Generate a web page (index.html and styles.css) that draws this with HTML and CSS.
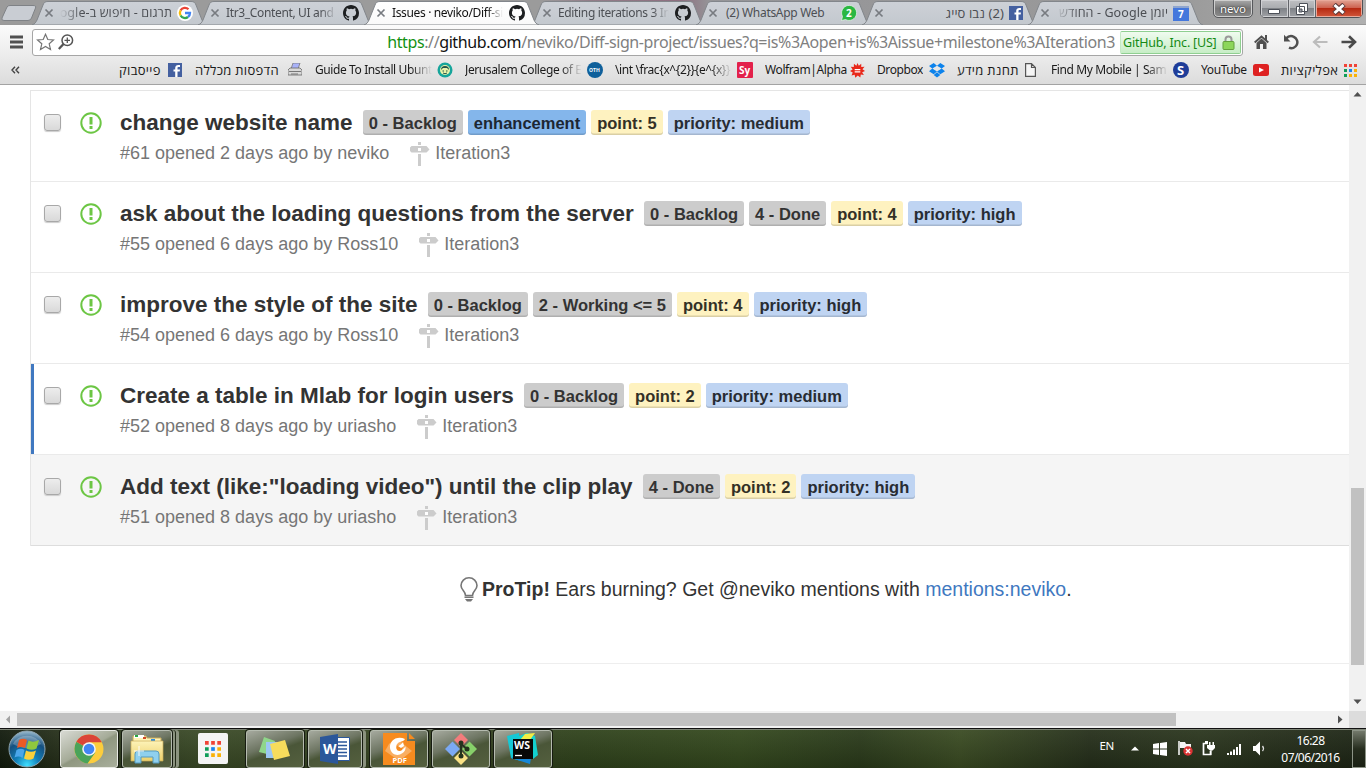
FILE: index.html
```html
<!DOCTYPE html>
<html lang="en">
<head>
<meta charset="utf-8">
<title>Issues · neviko/Diff-sign-project</title>
<link rel="stylesheet" href="styles.css">
</head>
<body>
<svg class="defs" width="0" height="0">
  <defs>
    <linearGradient id="tabGrad" x1="0" y1="0" x2="0" y2="1"><stop offset="0" stop-color="#cdd1d7"/><stop offset="1" stop-color="#c3c8ce"/></linearGradient>
    <linearGradient id="activeGrad" x1="0" y1="0" x2="0" y2="1"><stop offset="0" stop-color="#fff"/><stop offset="1" stop-color="#f9f9f9"/></linearGradient>
    <radialGradient id="orbGrad" cx=".5" cy=".95" r=".95"><stop offset="0" stop-color="#3fe0ff"/><stop offset=".35" stop-color="#127fb8"/><stop offset=".7" stop-color="#15507f"/><stop offset="1" stop-color="#9dbdd0"/></radialGradient>
    <linearGradient id="folderGrad" x1="0" y1="0" x2="0" y2="1"><stop offset="0" stop-color="#fdf3b8"/><stop offset="1" stop-color="#ecd06b"/></linearGradient>
    <symbol id="tab" viewBox="0 0 175 25"><path d="M0 25C3 24 4 22 5 20L11 5C12 2.500 13 1.500 16 1.500H159C162 1.500 163 2.500 164 5L170 20C171 22 172 24 175 25Z"/></symbol>
    <symbol id="close" viewBox="0 0 10 10"><path d="M1.500 1.500L8.500 8.500M8.500 1.500L1.500 8.500" fill="none" stroke="currentColor" stroke-width="1.700"/></symbol>
    <symbol id="github" viewBox="0 0 16 16"><path d="M8 0C3.580 0 0 3.580 0 8c0 3.540 2.290 6.530 5.470 7.590.4.070.55-.17.55-.38 0-.19-.01-.82-.01-1.490-2.010.37-2.530-.49-2.690-.94-.09-.23-.48-.94-.82-1.130-.28-.15-.68-.52-.01-.53.63-.01 1.080.58 1.230.82.72 1.210 1.870.87 2.330.66.07-.52.28-.87.51-1.070-1.780-.2-3.640-.89-3.640-3.950 0-.87.31-1.590.82-2.150-.08-.2-.36-1.020.08-2.120 0 0 .67-.21 2.200.82a7.600 7.600 0 0 1 4 0c1.530-1.040 2.200-.82 2.200-.82.44 1.100.16 1.920.08 2.120.51.56.82 1.270.82 2.150 0 3.070-1.870 3.750-3.650 3.950.29.25.54.73.54 1.480 0 1.070-.01 1.930-.01 2.200 0 .21.15.46.55.38A8 8 0 0 0 16 8c0-4.420-3.580-8-8-8z"/></symbol>
    <symbol id="fb" viewBox="0 0 14 14"><rect width="14" height="14" fill="#4460a0"/><path d="M7.200 14V8.500H5.500V6.500H7.200V5C7.200 3 8.500 2 10.200 2H12V4H10.700C9.800 4 9.500 4.300 9.500 5V6.500H12L11.700 8.500H9.500V14Z" fill="#fff"/></symbol>
    <symbol id="issue" viewBox="0 0 22 22"><circle cx="11" cy="11" r="9.700" fill="none" stroke="#6cc644" stroke-width="2"/><path d="M9.500 5H12.500V12.500H9.500ZM9.500 14H12.500V17H9.500Z" fill="#6cc644"/></symbol>
    <symbol id="milestone" viewBox="0 0 20 24"><path d="M8 0H11V3H8ZM1.500 4H16.500L19.500 7.500L16.500 10.500H1.500L0 9V5.500ZM8 12H11V24H8Z" fill="#ccc"/><path d="M8 6H11V9H8Z" fill="#fff"/></symbol>
    <symbol id="apps" viewBox="0 0 13 13"><path d="M0 0H3V3H0ZM5 0H8V3H5ZM10 0H13V3H10Z" fill="#f04336"/><path d="M0 5H3V8H0ZM0 10H3V13H0Z" fill="#0f9d58"/><path d="M5 5H8V8H5Z" fill="#1a84f0"/><path d="M10 5H13V8H10ZM5 10H8V13H5ZM10 10H13V13H10Z" fill="#f9b208"/></symbol>
  </defs>
</svg>
<div class="window">
  <header class="tabstrip">
    <svg class="newtab" width="38" height="25" viewBox="0 0 38 25"><path d="M2 18L7 7Q8 5.500 10 5.500H33Q36.500 5.500 35.500 8L31.500 18Q30.500 20.500 28 20.500H4Q1 20.500 2 18Z" fill="#c9cdd3" stroke="#7f8286"/></svg>
    <div class="tab"><svg class="tab-shape"><use href="#tab"/></svg><svg class="tab-close"><use href="#close"/></svg><span class="tab-title rtl t-google" dir="rtl">תרגום - חיפוש ב-Google</span>
      <svg class="fav" viewBox="0 0 16 16"><circle cx="8" cy="8" r="8" fill="#fff"/><g fill="none" stroke-width="2.300"><path d="M3.600 5.400A5 5 0 0 1 11.500 4.300" stroke="#ea4335"/><path d="M3.600 5.400A5 5 0 0 0 3.600 10.500" stroke="#fbbc05"/><path d="M3.600 10.500A5 5 0 0 0 11 12" stroke="#34a853"/><path d="M8 8H13A5 5 0 0 1 11 12" stroke="#4285f4"/></g></svg></div>
    <div class="tab"><svg class="tab-shape"><use href="#tab"/></svg><svg class="tab-close"><use href="#close"/></svg><span class="tab-title t-itr">Itr3_Content, UI and E</span><svg class="fav"><use href="#github"/></svg></div>
    <div class="tab active"><svg class="tab-shape"><use href="#tab"/></svg><svg class="tab-close"><use href="#close"/></svg><span class="tab-title t-issues">Issues · neviko/Diff-si</span><svg class="fav"><use href="#github"/></svg></div>
    <div class="tab"><svg class="tab-shape"><use href="#tab"/></svg><svg class="tab-close"><use href="#close"/></svg><span class="tab-title t-edit">Editing iterations 3 In</span><svg class="fav"><use href="#github"/></svg></div>
    <div class="tab"><svg class="tab-shape"><use href="#tab"/></svg><svg class="tab-close"><use href="#close"/></svg><span class="tab-title t-wa">(2) WhatsApp Web</span>
      <svg class="fav" viewBox="0 0 16 16"><path d="M.5 15.500L1.500 11.500A7.500 7.500 0 1 1 4.500 14.500Z" fill="#2bb741" stroke="#eef4ef" stroke-width=".7"/><text x="5" y="12" class="badge-num">2</text></svg></div>
    <div class="tab"><svg class="tab-shape"><use href="#tab"/></svg><svg class="tab-close"><use href="#close"/></svg><span class="tab-title rtl t-nevo" dir="rtl">(2) נבו סייג</span><svg class="fav fav-fb"><use href="#fb"/></svg></div>
    <div class="tab last"><svg class="tab-shape"><use href="#tab"/></svg><svg class="tab-close"><use href="#close"/></svg><span class="tab-title rtl t-cal" dir="rtl">יומן Google - החודש</span>
      <svg class="fav" viewBox="0 0 16 16"><path d="M0 2H16V16H0Z" fill="#4477dc"/><path d="M0 1H16V3H0Z" fill="#8ea5cf"/><text x="5" y="13" class="badge-num">7</text></svg></div>
    <div class="user">nevo</div>
    <div class="winbtns">
      <span class="wb"><svg width="14" height="14"><path d="M1.500 7.500H12.500V11.500H1.500Z" fill="#fff" stroke="#4c5058"/></svg></span>
      <span class="wb"><svg width="14" height="14"><path d="M4.500 1.500H12.500V9.500H4.500ZM1.500 4.500H9.500V12.500H1.500Z" fill="#fff" stroke="#4c5058"/><path d="M4 7H7V10H4Z" fill="#9a9ea6" stroke="#4c5058"/></svg></span>
      <span class="wb wb-close"><svg width="14" height="12"><path d="M2 1.500L12 10.500M12 1.500L2 10.500" stroke="#5f3c3c" stroke-width="5"/><path d="M2.500 2L11.500 10M11.500 2L2.500 10" stroke="#fff" stroke-width="3"/></svg></span>
    </div>
  </header>

  <div class="toolbar">
    <svg class="menu" width="13" height="14"><path d="M0 2H13M0 7H13M0 12H13" stroke="#505050" stroke-width="2.800"/></svg>
    <div class="omnibox">
      <svg width="19" height="18" viewBox="0 0 19 18"><path d="M9.500 1.300L11.800 6.500L17.500 7L13.200 10.800L14.500 16.500L9.500 13.500L4.500 16.500L5.800 10.800L1.500 7L7.200 6.500Z" fill="#fff" stroke="#747474" stroke-width="1.200"/></svg>
      <svg class="lens" width="16" height="16" viewBox="0 0 16 16"><circle cx="9.300" cy="6.300" r="5.300" fill="none" stroke="#555" stroke-width="1.500"/><path d="M5.500 10L.8 15" stroke="#555" stroke-width="2.300"/><path d="M6.500 6.300H12M9.300 3.500V9" stroke="#555" stroke-width="1.300"/></svg>
      <div class="url"><span class="secure">https</span>://<span class="host">github.com</span>/neviko/Diff-sign-project/issues?q=is%3Aopen+is%3Aissue+milestone%3AIteration3</div>
      <div class="cert"><span>GitHub, Inc. [US]</span><svg width="13" height="15" viewBox="0 0 13 15"><path d="M3.500 8V4.500A3 3 0 0 1 9.500 4.500V8" fill="none" stroke="#999" stroke-width="2"/><rect x="1" y="6.500" width="11" height="8" rx="1" fill="#8cd65a" stroke="#63a13c"/></svg></div>
    </div>
    <svg class="home" width="15" height="14" viewBox="0 0 15 14"><path d="M.7 7.500L7.500 1.500L14.300 7.500" fill="none" stroke="#505050" stroke-width="2"/><path d="M11 0H13V5H11ZM2.500 8L7.500 3.600L12.500 8V14H9V9H6V14H2.500Z" fill="#505050"/></svg>
    <svg class="reload" width="16" height="16" viewBox="0 0 16 16"><path d="M3 4.500C6 1.500 9 1.800 11 3A5.500 5.500 0 0 1 6 13.600" fill="none" stroke="#505050" stroke-width="2.500"/><path d="M1 .8V7.500H7.500Z" fill="#505050"/></svg>
    <svg class="back" width="16" height="14" viewBox="0 0 16 14"><path d="M15.500 7H2.500M8 1.500L2 7L8 12.500" fill="none" stroke="#bcbcbc" stroke-width="2.200"/></svg>
    <svg class="fwd" width="16" height="14" viewBox="0 0 16 14"><path d="M.5 7H13.500M8 1.200L14 7L8 12.800" fill="none" stroke="#4a4a4a" stroke-width="2.600"/></svg>
  </div>

  <nav class="bookmarks">
    <svg class="more" width="9" height="8"><path d="M4 .7L1 4L4 7.300M8 .7L5 4L8 7.300" fill="none" stroke="#444" stroke-width="1.400"/></svg>
    <a class="bm"><span class="bm-text he b1" dir="rtl">פייסבוק</span><svg width="14" height="14"><use href="#fb"/></svg></a>
    <a class="bm"><span class="bm-text he b2" dir="rtl">הדפסות מכללה</span><svg width="14" height="14" viewBox="0 0 14 14"><path d="M5 0H12L10 6H3Z" fill="#a9b2f8" stroke="#777" stroke-width=".8"/><path d="M2 5H12L14 7V12H0V7Z" fill="#d9d9d9" stroke="#666" stroke-width=".8"/><path d="M1 8.500H13M3 11H10" stroke="#777"/></svg></a>
    <a class="bm"><span class="bm-text fade b3">Guide To Install Ubunt</span><svg width="16" height="16" viewBox="0 0 16 16"><circle cx="8" cy="8" r="7.500" fill="#16a59b"/><circle cx="8" cy="8" r="5" fill="#e9f3a8"/><path d="M4 8A4 4 0 0 1 12 8L10 6H6Z" fill="#23534b"/><path d="M5.500 9H7M9 9H10.500M6 11Q8 12.500 10 11" stroke="#23534b" fill="none"/></svg></a>
    <a class="bm"><span class="bm-text fade b4">Jerusalem College of E</span><svg width="16" height="16" viewBox="0 0 16 16"><circle cx="8" cy="8" r="8" fill="#0f609b"/><text x="2" y="10" class="oth">OTH</text></svg></a>
    <a class="bm"><span class="bm-text fade b5">\int \frac{x^{2}}{e^{x}}</span><svg width="16" height="16" viewBox="0 0 16 16"><rect width="16" height="16" rx="1" fill="#e3214b"/><text x="2" y="12" class="sy">Sy</text></svg></a>
    <a class="bm"><span class="bm-text b6">Wolfram|Alpha</span><svg width="15" height="15" viewBox="0 0 16 16"><path d="M8 0L9.400 3L12 .8L12 4.200L15.500 4L13.300 6.600L16 8.500L13 9.800L14.800 12.700L11.500 12.300L11 15.500L8.300 13.300L5.600 15.800L5 12.500L1.600 13.300L2.900 10.200L0 8.500L2.800 6.800L.8 4L4 4.200L4.200 .9L6.800 3Z" fill="#e8281a"/><path d="M5 7H11M5 9.500H11" stroke="#fff" stroke-width="1.200"/></svg></a>
    <a class="bm"><span class="bm-text b7">Dropbox</span><svg width="16" height="15" viewBox="0 0 16 15"><path d="M4.700 0L8 2.800L3.300 5.600L0 3ZM11.300 0L16 3L12.700 5.600L8 2.800ZM3.300 5.600L8 8.500L4.700 11.200L0 8.300ZM12.700 5.600L16 8.300L11.300 11.200L8 8.500ZM8 9.200L11.300 12L8 14.500L4.700 12Z" fill="#0d83ec"/><path d="M8 3.500L11.800 5.700L8 7.800L4.200 5.700Z" fill="#e8e8e8"/></svg></a>
    <a class="bm"><span class="bm-text he b8" dir="rtl">תחנת מידע</span><svg class="page" width="11" height="14"><path d="M.6 .6H6.500L10.400 4.500V13.400H.6ZM6.500 .6V4.500H10.400" fill="#f5f5f5" stroke="#555" stroke-width="1.200"/></svg></a>
    <a class="bm"><span class="bm-text fade b9">Find My Mobile | Sam</span><svg width="16" height="16" viewBox="0 0 16 16"><circle cx="8" cy="8" r="8" fill="#1f3d99"/><text x="4" y="13" class="ess">S</text></svg></a>
    <a class="bm"><span class="bm-text b10">YouTube</span><svg width="16" height="12"><rect width="16" height="12" rx="2.500" fill="#de2222"/><path d="M6 3.500L11 6L6 8.500Z" fill="#fff"/></svg></a>
    <a class="bm"><span class="bm-text he b11" dir="rtl">אפליקציות</span><svg width="13" height="13"><use href="#apps"/></svg></a>
  </nav>

  <div class="view">
    <main class="page-body">
      <ul class="issues">
        <li class="issue"><i class="check"></i><svg class="state"><use href="#issue"/></svg><div class="info"><div class="line"><b class="title">change website name</b><span class="label gray">0 - Backlog</span><span class="label blue">enhancement</span><span class="label yellow">point: 5</span><span class="label light">priority: medium</span></div><div class="meta"><span>#61 opened 2 days ago by neviko</span><svg class="mile"><use href="#milestone"/></svg><span>Iteration3</span></div></div></li>
        <li class="issue"><i class="check"></i><svg class="state"><use href="#issue"/></svg><div class="info"><div class="line"><b class="title">ask about the loading questions from the server</b><span class="label gray">0 - Backlog</span><span class="label gray">4 - Done</span><span class="label yellow">point: 4</span><span class="label light">priority: high</span></div><div class="meta"><span>#55 opened 6 days ago by Ross10</span><svg class="mile"><use href="#milestone"/></svg><span>Iteration3</span></div></div></li>
        <li class="issue"><i class="check"></i><svg class="state"><use href="#issue"/></svg><div class="info"><div class="line"><b class="title">improve the style of the site</b><span class="label gray">0 - Backlog</span><span class="label gray">2 - Working &lt;= 5</span><span class="label yellow">point: 4</span><span class="label light">priority: high</span></div><div class="meta"><span>#54 opened 6 days ago by Ross10</span><svg class="mile"><use href="#milestone"/></svg><span>Iteration3</span></div></div></li>
        <li class="issue current"><i class="check"></i><svg class="state"><use href="#issue"/></svg><div class="info"><div class="line"><b class="title">Create a table in Mlab for login users</b><span class="label gray">0 - Backlog</span><span class="label yellow">point: 2</span><span class="label light">priority: medium</span></div><div class="meta"><span>#52 opened 8 days ago by uriasho</span><svg class="mile"><use href="#milestone"/></svg><span>Iteration3</span></div></div></li>
        <li class="issue hover"><i class="check"></i><svg class="state"><use href="#issue"/></svg><div class="info"><div class="line"><b class="title">Add text (like:"loading video") until the clip play</b><span class="label gray">4 - Done</span><span class="label yellow">point: 2</span><span class="label light">priority: high</span></div><div class="meta"><span>#51 opened 8 days ago by uriasho</span><svg class="mile"><use href="#milestone"/></svg><span>Iteration3</span></div></div></li>
      </ul>
      <div class="protip"><svg width="18" height="25" viewBox="0 0 18 25"><path d="M5.500 18.500C5.500 14 1 13 1 8.500A8 7.700 0 0 1 17 8.500C17 13 12.500 14 12.500 18.500Z" fill="none" stroke="#767676" stroke-width="1.600"/><path d="M4.500 19.500H13.500V21H4.500ZM5 22H13L11 24.500H7Z" fill="#767676"/></svg><p><b>ProTip!</b> Ears burning? Get @neviko mentions with <a>mentions:neviko</a>.</p></div>
      <div class="footer-rule"></div>
    </main>
    <div class="vscroll"><svg width="17" height="17"><path d="M4.500 11.500L8.500 7L12.500 11.500Z" fill="#505050"/></svg><div class="vtrack"><div class="vthumb"></div></div><svg width="17" height="17"><path d="M4.500 5.500L8.500 10L12.500 5.500Z" fill="#505050"/></svg></div>
  </div>
  <div class="hscroll"><svg width="17" height="17"><path d="M10 4.500L6 8.500L10 12.500Z" fill="#a3a3a3"/></svg><div class="hthumb"></div><svg class="harrow" width="17" height="17"><path d="M6 4.500L10.500 8.500L6 12.500Z" fill="#505050"/></svg><div class="corner"></div></div>

  <footer class="taskbar">
    <svg class="orb" width="38" height="38" viewBox="0 0 38 38"><circle cx="19" cy="19" r="18" fill="url(#orbGrad)" stroke="#8fa5b0" stroke-width="1"/><path d="M5 14A15 13 0 0 1 33 14Q19 22 5 14Z" fill="#fff" opacity=".25"/><path d="M11 10Q15 7.500 19 10L17 18Q13 16 9 18Z" fill="#ea5a25"/><path d="M20.500 10.500Q25 13 31 10L28.500 18.500Q24 21 18.500 18.500Z" fill="#8fc73e"/><path d="M8.500 20Q13 17.500 16.500 20L14.500 28Q11 25.500 6.500 27.500Z" fill="#4ba6ea"/><path d="M18 20.500Q23 23 28 20.500L25.500 28.500Q21 31 16 28.500Z" fill="#fbd03b"/></svg>
    <div class="task lit"><svg width="30" height="30" viewBox="0 0 30 30"><circle cx="15" cy="15" r="14.500" fill="#fccd3d"/><path d="M15 15L2.400 7.800A14.500 14.500 0 0 0 13.500 29.400L21.300 18.500Z" fill="#4aa35a"/><path d="M15 15L2.400 7.800A14.500 14.500 0 0 1 27.800 8.200H15Z" fill="#db4437"/><circle cx="15" cy="15" r="6.800" fill="#f4f4f4"/><circle cx="15" cy="15" r="5.300" fill="#4285f4"/></svg></div>
    <div class="task stack e"><svg width="34" height="31" viewBox="0 0 34 31"><path d="M3 3H16L17 5H31V12H3Z" fill="#fff3b5" stroke="#c8ac5d"/><path d="M4 2H14V5H4Z" fill="#fff"/><path d="M5 2H8V4H5Z" fill="#28a745"/><path d="M13 4H16V6H13Z" fill="#d14b2a"/><path d="M21 6H25V8H21Z" fill="#318fe0"/><path d="M1 8H33V28H1Z" fill="url(#folderGrad)" stroke="#c9ad56" stroke-width=".7"/><path d="M5 30V21Q5 18 8 18H26Q29 18 29 21V30H23V24H11V30Z" fill="#8fd0ee" stroke="#559bc0"/><path d="M9 13V23M4 18H14" stroke="#fff" opacity=".9"/></svg></div>
    <div class="plain"><svg width="16" height="16"><use href="#apps"/></svg></div>
    <div class="task n"><svg width="34" height="26" viewBox="0 0 34 26"><path d="M6 1L17 5L13 19L1 16Z" fill="#8fd68a"/><path d="M8 6H20V22H8Z" fill="#9cc7f2"/><path d="M12 8L27 4L32 20L16 24Z" fill="#f7dc5c"/></svg></div>
    <div class="task stack w"><svg width="31" height="30" viewBox="0 0 31 30"><path d="M16 3.500H29.500V26.500H16Z" fill="#fff" stroke="#2b579a"/><path d="M18 8H27M18 11.500H27M18 15H27M18 18.500H27M18 22H27" stroke="#2b579a" stroke-width="1.500"/><path d="M0 3L18 0V30L0 27Z" fill="#2b579a"/><text x="3" y="20" class="icon-w">W</text></svg></div>
    <div class="task p"><svg width="32" height="32" viewBox="0 0 32 32"><path d="M0 0H24V8H32V32H0ZM26 0L32 6H26Z" fill="#f68b1f"/><path d="M6 11L13 5L29 18L20 25H12L2 18Z" fill="#f9ae62"/><path d="M22 6C14 2 6 8 7 15C8 21 13 23 17 21.500C21 20 23 17 22.500 13.500C20 17 17 18 14.500 16.500C12 15 13 10 17 9C19 8.300 21 8 22 6Z" fill="#fff"/><circle cx="16.500" cy="15" r="3" fill="#f68b1f"/><path d="M15 13C17 12 19 11 20 9L21 13L18 15Z" fill="#fff"/><text x="9.500" y="30" class="icon-pdf">PDF</text></svg></div>
    <div class="task p"><svg width="32" height="32" viewBox="0 0 32 32"><path d="M16 0L23 7L16 14L9 7Z" fill="#f37c7c"/><path d="M7.500 8.500L15 16L7.500 23.500L0 16Z" fill="#7ba9f4"/><path d="M24.500 8.500L32 16L24.500 23.500L17 16Z" fill="#87d06a"/><path d="M16 18L23 25L16 32L9 25Z" fill="#fae285"/><path d="M16 9V23M16 11L22 16" stroke="#25331e" stroke-width="2"/><circle cx="16" cy="10" r="2.500" fill="#25331e"/><circle cx="22" cy="16" r="2.500" fill="#25331e"/><circle cx="16" cy="23" r="2.500" fill="#25331e"/></svg></div>
    <div class="task p"><svg width="32" height="32" viewBox="0 0 32 32"><path d="M0 3L12 0L14 28L4 25Z" fill="#15c8d5"/><path d="M12 3L20 0L28 3L31 22L26 26H8Z" fill="#13d1cf"/><path d="M18 1L28 0L23 7H13Z" fill="#f2ed45"/><path d="M4 25L10 22L24 25L23 31Z" fill="#1687d8"/><rect x="6" y="6" width="20" height="20" fill="#080808"/><text x="7" y="16" class="icon-ws">WS</text><path d="M8 22.500H15" stroke="#fff" stroke-width="1.300"/></svg></div>
    <div class="tray">
      <span class="lang">EN</span>
      <svg class="up" width="8" height="5"><path d="M0 4.500L4 .5L8 4.500Z" fill="#fff"/></svg>
      <svg class="win" width="14" height="14"><path d="M0 2L6 1V6.500H0ZM7 1L14 0V6.500H7ZM0 7.500H6V13L0 12ZM7 7.500H14V14L7 13Z" fill="#fff"/></svg>
      <svg class="flag" width="15" height="15"><path d="M1 0V14" stroke="#fff" stroke-width="1.500"/><path d="M2 1H7L8 3H13V8H7L6 7H2Z" fill="#f5f5f5"/><circle cx="10" cy="10" r="4.700" fill="#dc3434"/><path d="M8 8L12 12M12 8L8 12" stroke="#fff" stroke-width="1.500"/></svg>
      <svg class="plug" width="13" height="15"><path d="M6 2.500H1.500V13.500H8.500V10" fill="none" stroke="#fff" stroke-width="1.700"/><path d="M3 0H6V2H3ZM7 1H8.500V4H7ZM10.500 1H12V4H10.500ZM5 4H13V7L10.500 9.500H8L5 7Z" fill="#fff"/><path d="M9 9V14" stroke="#fff"/></svg>
      <svg class="signal" width="15" height="12"><path d="M1 12V10M4 12V8.500M7 12V6.500M10 12V4M13 12V1" stroke="#fff" stroke-width="2"/></svg>
      <svg class="vol" width="14" height="15"><path d="M0 5H2.500L7 .5V14.500L2.500 10H0Z" fill="#fff"/><path d="M9.500 5Q11.500 7.500 9.500 10" fill="none" stroke="#ddd" stroke-width="1.300"/></svg>
      <div class="clock"><span class="time">16:28</span><span class="date">07/06/2016</span></div>
      <div class="desk"></div>
    </div>
  </footer>
</div>
</body>
</html>
```
FILE: styles.css
```css
* { box-sizing: border-box; }
body { margin: 0; width: 1366px; height: 768px; overflow: hidden; background: #fff; font-family: "Liberation Sans", Arial, sans-serif; }
svg { display: block; flex: none; }
.defs { position: absolute; }
.window { display: flex; flex-direction: column; width: 1366px; height: 768px; }

.tabstrip, .toolbar, .bookmarks, .taskbar { font-family: "Noto Sans", "Open Sans", "DejaVu Sans", sans-serif; }
.tabstrip { display: flex; height: 25px; background: linear-gradient(90deg, #9b9b9b 0 540px, #927d88 590px, #8d6f80 680px, #959598 710px, #9a9a9a 1180px, #b0b0b0 1366px); border-bottom: 1px solid #999; }
.newtab { margin-right: -6px; }
.tab { position: relative; display: flex; align-items: center; width: 174px; height: 25px; margin-right: -8px; padding: 1px 13px 0 12px; color: #4c4f54; flex: none; }
.tab-shape { position: absolute; left: 0; top: 0; width: 175px; height: 25px; fill: url(#tabGrad); stroke: #82868b; stroke-width: 1; }
.tab.active { z-index: 2; color: #111; }
.tab.active .tab-shape { fill: url(#activeGrad); }
.tab-close { position: relative; width: 10px; height: 10px; margin-right: 6px; color: #777b80; }
.tab-title { position: relative; flex: 1; min-width: 0; overflow: hidden; white-space: nowrap; font-size: 12px; line-height: 18px; letter-spacing: -.35px; margin-right: 6px; mask-image: linear-gradient(90deg, #000 85%, transparent); }
.tab-title.rtl { margin: 0 5px 0 0; font-size: 12.500px; letter-spacing: .1px; mask-image: linear-gradient(270deg, #000 80%, transparent); }
.tab-title.t-nevo { font-size: 13px; letter-spacing: .1px; }
.tab-title.t-nevo, .tab-title.t-wa { mask-image: none; }
.tab-title.t-wa { padding-left: 2px; letter-spacing: -.3px; }
.fav { position: relative; width: 16px; height: 16px; fill: #1d1f21; }
.fav-fb { width: 14px; height: 14px; }
.badge-num { font: bold 10px "Open Sans", sans-serif; fill: #fff; }
.user { margin: -1px 0 0 19px; width: 40px; height: 19px; border: 1px solid #57595c; border-radius: 0 0 5px 5px; background: linear-gradient(#aaa, #777 50%, #8a8a8a); box-shadow: inset 0 0 0 1px #cfcfcf; color: #fff; font-size: 11.500px; line-height: 18px; text-align: center; text-shadow: 0 0 2px #333, 0 0 1px #333; }
.winbtns { display: flex; margin: -1px 0 0 7px; width: 103px; height: 19px; border: 1px solid #505257; border-radius: 0 0 5px 5px; overflow: hidden; box-shadow: inset 0 0 0 1px #ddd; }
.wb { display: flex; align-items: center; justify-content: center; width: 28px; background: linear-gradient(#bfc0c3, #a9abaf 48%, #7f8287 50%, #a0a2a6); border-right: 1px solid #63656a; box-shadow: inset 0 0 0 1px #d0d1d4; }
.wb-close { width: 46px; background: linear-gradient(#e0a393, #cd5f4c 48%, #b62a12 50%, #d2573b); border: 0; box-shadow: inset 0 0 0 1px #e9a99a; }

.toolbar { display: flex; align-items: center; height: 32px; padding: 2px 9px 0 10px; background: linear-gradient(#fbfbfb, #ebebeb); }
.menu { margin-right: 9px; }
.omnibox { display: flex; flex: none; align-items: center; width: 1211px; height: 27px; padding: 0 1px 0 3px; border: 1px solid #a6a6a6; border-radius: 3px; background: #fff; }
.lens { margin-left: 3px; }
.url { flex: 1; text-align: right; white-space: nowrap; font-size: 16px; letter-spacing: -.4px; color: #808080; padding-right: 5px; line-height: 22px; }
.secure { color: #129112; }
.host { color: #111; }
.cert { display: flex; align-items: center; justify-content: space-between; width: 121px; height: 23px; padding: 0 5px 0 2px; border: 1px solid #8fcf91; border-left-color: #c5e8c5; border-radius: 2px; background: linear-gradient(#f0fbef, #c7edc6); color: #158a15; font-size: 12.500px; letter-spacing: -.2px; white-space: nowrap; }
.home { margin-left: 11px; }
.reload { margin-left: 14px; }
.back { margin-left: 13px; }
.fwd { margin-left: 13px; }

.bookmarks { display: grid; grid-template-columns: 97px 64px 108px 138px 138px 138px 100px 68px 82px 138px 68px 77px; column-gap: 12px; align-items: center; height: 28px; padding: 0 0 1px 10px; background: linear-gradient(#ebebeb, #dcdcdc); border-bottom: 1px solid #a3a3a3; color: #1a1a1a; font-size: 12px; }
.more { margin-left: 1px; }
.bm { display: flex; align-items: center; justify-content: space-between; height: 24px; }
.bm-text { white-space: nowrap; overflow: hidden; line-height: 18px; letter-spacing: -.4px; }
.bm-text.he { font-size: 13px; letter-spacing: .3px; }
.he + svg { margin-right: 1px; }
.fade { width: 117px; mask-image: linear-gradient(90deg, #000 82%, transparent); }
.he + .page { margin-right: 3px; }
.oth { font: bold 5px "Open Sans", sans-serif; fill: #fff; }
.sy { font: bold 10px "Open Sans", sans-serif; fill: #fff; }
.ess { font: bold 13px "Open Sans", sans-serif; fill: #fff; }

.view { display: flex; height: 626px; }
.page-body { width: 1349px; padding: 5px 0 0 30px; }
.issues { list-style: none; margin: 0; padding: 0; border-top: 1px solid #e5e5e5; border-left: 1px solid #e5e5e5; }
.issue { display: flex; align-items: flex-start; height: 91px; border-bottom: 1px solid #eaeaea; padding: 19px 0 0 13px; }
.issue.current { box-shadow: inset 3px 0 #4078c0; }
.issue.hover { background: #f5f5f5; border-bottom-color: #ddd; }
.check { width: 17px; height: 17px; margin-top: 4px; border: 1px solid #a8a8a8; border-radius: 3px; background: linear-gradient(#ededed, #d9d9d9); box-shadow: 0 1px 1px #ccc; }
.state { width: 22px; height: 22px; margin: 2px 0 0 18.500px; }
.info { margin-left: 18.500px; }
.line { display: flex; height: 25px; gap: 5px; }
.title { margin-right: 5.200px; font-size: 22.500px; line-height: 25px; color: #333; white-space: nowrap; }
.label { height: 25px; padding: 0 6px; border-radius: 3px; box-shadow: inset 0 -1.500px rgba(0, 0, 0, .14); font-size: 16.500px; font-weight: bold; line-height: 26px; color: #333; white-space: nowrap; }
.gray { background: #ccc; }
.blue { background: #84b6eb; color: #1c2733; }
.yellow { background: #fef2c0; color: #333026; }
.light { background: #bfd4f2; color: #282c33; }
.meta { display: flex; align-items: flex-start; margin-top: 6px; color: #767676; font-size: 18px; line-height: 24px; white-space: nowrap; }
.mile { width: 20px; height: 24px; margin: 1px 5px 0 21px; }
.protip { display: flex; align-items: center; gap: 4px; height: 28px; margin-top: 29px; padding-left: 430px; }
.protip p { margin: 0; font-size: 19.500px; line-height: 28px; color: #333; white-space: nowrap; }
.protip a { color: #4078c0; }
.footer-rule { margin-top: 60px; border-top: 1px solid #eee; }

.vscroll { display: flex; flex-direction: column; width: 17px; background: #f1f1f1; }
.vtrack { flex: 1; padding: 386px 2px 0; }
.vthumb { height: 177px; background: #c1c1c1; }
.hscroll { display: flex; align-items: center; height: 17px; background: #f1f1f1; }
.hthumb { width: 1159px; height: 13px; background: #c1c1c1; }
.harrow { margin-left: auto; }
.corner { width: 17px; height: 17px; background: #dcdcdc; }

.taskbar { display: flex; align-items: center; height: 40px; padding-left: 8px; border-top: 1px solid #111; box-shadow: inset 0 1px #7d8476; background: linear-gradient(rgba(255,255,255,.06), rgba(0,0,0,.15)), linear-gradient(90deg, #111a0c, #26301a 60px, #3a4a26 200px, #33401f 480px, #2f421b 580px, #33481d 740px, #2a3a1a 860px, #3a4b22 960px, #252f1a 1090px, #2a351d 1200px, #1d2515 1366px); }
.task { display: flex; align-items: center; justify-content: center; width: 58px; height: 38px; margin-right: 4px; border: 1px solid #b5bbaf; border-radius: 3px; background: linear-gradient(160deg, #a6aa9f 0, #6d7562 40%, #4a5638 55%, #55603f); box-shadow: 0 0 0 1px #161b10; }
.task.lit { border-color: #e7e9e3; background: linear-gradient(150deg, #d8dad3 0, #a5ab98 48%, #8f9780 52%, #a9af9c); }
.orb { margin-right: 14px; }
.stack.e { width: 50px; margin-right: 26px; box-shadow: 0 0 0 1px #161b10, 3px 0 0 0 #8b937f, 4px 0 0 0 #222a18, 7px 0 0 0 #8b937f; }
.plain { display: flex; align-items: center; justify-content: center; width: 30px; height: 31px; margin-right: 18px; border-radius: 2px; background: #f4f4f4; }
.stack.w { width: 54px; margin-right: 8px; box-shadow: 0 0 0 1px #161b10, 4px 0 0 0 #8b937f; }
.icon-w { font: bold 14px "Open Sans", sans-serif; fill: #fff; }
.icon-pdf { font: bold 7.500px "Open Sans", sans-serif; fill: #fff; }
.icon-ws { font: bold 10.500px "Open Sans", sans-serif; fill: #fff; }
.tray { display: flex; align-items: center; margin-left: auto; height: 39px; color: #fff; font-size: 12px; }
.lang { margin: -6px 20px 0 0; font-size: 11.500px; letter-spacing: -.3px; }
.win { margin-left: 14px; }
.up { margin-left: -3px; }
.flag { margin-left: 11px; }
.plug { margin-left: 9px; }
.signal { margin-left: 12px; }
.vol { margin-left: 11px; }
.clock { display: flex; flex-direction: column; align-items: center; margin-left: 14px; margin-right: 12px; width: 59px; line-height: 17px; letter-spacing: -.55px; white-space: nowrap; }
.desk { width: 14px; height: 38px; border: 1px solid #8d9487; background: linear-gradient(#73796b, #262d1e 50%, #1a2013); }
```
